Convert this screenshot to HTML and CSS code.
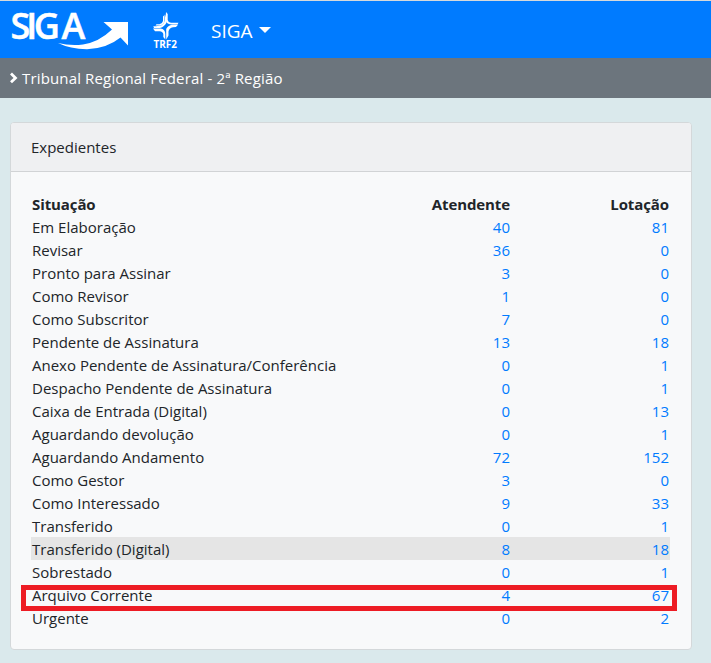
FILE: index.html
```html
<!DOCTYPE html>
<html lang="pt-BR">
<head>
<meta charset="utf-8">
<title>SIGA</title>
<link rel="stylesheet" href="styles.css">
</head>
<body>
<nav class="navbar">
  <svg class="logo" width="120" height="57" viewBox="10 1 120 57" role="img" aria-label="SIGA">
    <text class="logo-text" x="10.500 26.300 33.800 61.500" y="38.900">SIGA</text>
    <path d="M58 43Q70 46 83 44.500Q99 42 112 29.500L103.500 22H128V45.500L120.500 37.500Q107 48.500 87 49.200Q70 49 58 43Z"/>
  </svg>
  <svg class="trf" width="28" height="57" viewBox="152 1 28 57" role="img" aria-label="TRF2">
    <path d="M166 12L167.700 14V20Q168.300 22.500 171 22.700H178.500L177.500 24.500H171.500Q165.500 24 165.500 19Z"/>
    <path d="M164.900 14V20Q164.500 23.500 161.500 25.300L156 26.300H153.300L154 27.900H160Q162.500 27.700 163.500 26.300Q167.300 23.500 166.700 20L164.900 14Z"/>
    <path d="M153 28.400H160.500Q165.300 29 165.300 34V39.500L163.300 37V34Q163 31.700 159.500 31.200H155Z"/>
    <path d="M178 24.800H172.500Q167.500 25.500 166.200 29V39.500L168.500 35.500V31.500Q169 28 173 27.200L176 26.900Z"/>
    <path d="M164.500 15L163 16.500V21Q162.500 23.500 159.500 24.300H156.500L155.500 25.500H160Q164.500 24.500 164.500 20Z"/>
    <text class="trf-text" x="153.500" y="48.300" textLength="23.500" lengthAdjust="spacingAndGlyphs">TRF2</text>
  </svg>
  <a class="menu">SIGA<span class="caret"></span></a>
</nav>
<div class="crumb">
  <svg width="10" height="12" viewBox="0 0 10 12"><path d="M2 1.500L6.500 5.900L2 10.300"/></svg>
  <span>Tribunal Regional Federal - 2ª Região</span>
</div>
<main class="card">
  <div class="card-header">Expedientes</div>
  <div class="card-body">
    <table>
      <thead><tr><th class="situacao">Situação</th><th class="atendente">Atendente</th><th class="lotacao">Lotação</th></tr></thead>
      <tbody>
        <tr><td>Em Elaboração</td><td>40</td><td>81</td></tr>
        <tr><td>Revisar</td><td>36</td><td>0</td></tr>
        <tr><td>Pronto para Assinar</td><td>3</td><td>0</td></tr>
        <tr><td>Como Revisor</td><td>1</td><td>0</td></tr>
        <tr><td>Como Subscritor</td><td>7</td><td>0</td></tr>
        <tr><td>Pendente de Assinatura</td><td>13</td><td>18</td></tr>
        <tr><td>Anexo Pendente de Assinatura/Conferência</td><td>0</td><td>1</td></tr>
        <tr><td>Despacho Pendente de Assinatura</td><td>0</td><td>1</td></tr>
        <tr><td>Caixa de Entrada (Digital)</td><td>0</td><td>13</td></tr>
        <tr><td>Aguardando devolução</td><td>0</td><td>1</td></tr>
        <tr><td>Aguardando Andamento</td><td>72</td><td>152</td></tr>
        <tr><td>Como Gestor</td><td>3</td><td>0</td></tr>
        <tr><td>Como Interessado</td><td>9</td><td>33</td></tr>
        <tr><td>Transferido</td><td>0</td><td>1</td></tr>
        <tr class="hover"><td>Transferido (Digital)</td><td>8</td><td>18</td></tr>
        <tr><td>Sobrestado</td><td>0</td><td>1</td></tr>
        <tr><td>Arquivo Corrente</td><td>4</td><td>67</td></tr>
        <tr><td>Urgente</td><td>0</td><td>2</td></tr>
      </tbody>
    </table>
  </div>
  <div class="marker"></div>
</main>
</body>
</html>
```
FILE: styles.css
```css
* { box-sizing: border-box; }
body {
  margin: 0;
  height: 663px;
  overflow: hidden;
  background: #dae9ec;
  color: #212529;
  font: 15px/23px "Open Sans", "Noto Sans", sans-serif;
}
.navbar {
  height: 58px;
  border-top: 1px solid #d5d9dc;
  background: #007bff;
  display: flex;
  align-items: flex-start;
  padding: 0 10px;
}
.logo, .trf { fill: #fff; flex: none; overflow: visible; }
.logo-text { font: 600 36px "Open Sans", sans-serif; stroke: #fff; stroke-width: .5px; }
.trf { margin-left: 22px; }
.trf-text { font: 700 10px "Open Sans", sans-serif; }
.menu {
  margin: 15px 0 0 31px;
  color: #fff;
  font-size: 19px;
  line-height: 30px;
  display: flex;
  align-items: center;
}
.caret {
  margin: -3px 0 0 6px;
  border: 6px solid transparent;
  border-top-color: #fff;
  border-bottom: 0;
}
.crumb {
  height: 40px;
  background: #6c757d;
  color: #fff;
  display: flex;
  align-items: center;
  padding: 0 0 0 9px;
  letter-spacing: .15px;
}
.crumb svg { margin-right: 3px; fill: none; stroke: #fff; stroke-width: 2.8; }
.card {
  position: relative;
  width: 682px;
  height: 528px;
  margin: 24px 0 0 10px;
  background: #f8f9fa;
  border: 1px solid #d4d8da;
  border-radius: 4px;
}
.card-header {
  height: 49px;
  padding: 13px 20px;
  background: #eff0f2;
  border-bottom: 1px solid #d1d3d5;
  border-radius: 3px 3px 0 0;
}
.card-body { padding: 20px; }
table { width: 639px; table-layout: fixed; border-collapse: collapse; }
tr { height: 23px; }
th, td {
  padding: 2px 1px 0;
  line-height: 21px;
  text-align: right;
  white-space: nowrap;
  color: #007bff;
}
th { color: #212529; letter-spacing: -.1px; }
th:first-child, td:first-child { text-align: left; color: #212529; }
.situacao { width: 320px; }
.atendente { width: 160px; }
.hover { background: #e5e5e5; }
.marker {
  position: absolute;
  left: 10px;
  top: 462px;
  width: 656px;
  height: 26px;
  border: 5px solid #ed1c24;
}
```
